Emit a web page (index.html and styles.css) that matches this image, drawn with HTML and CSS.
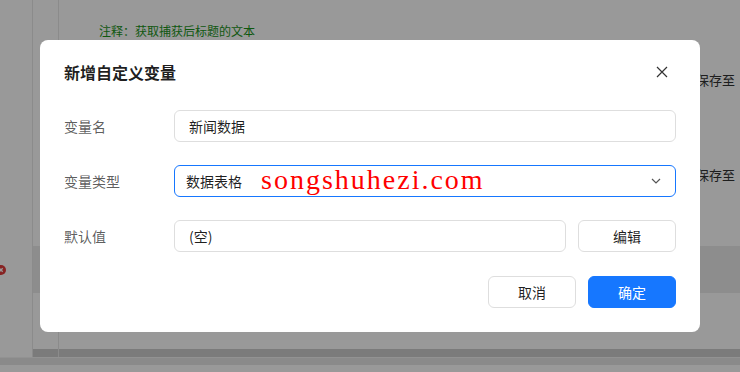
FILE: index.html
```html
<!DOCTYPE html>
<html lang="zh-CN">
<head>
  <meta charset="UTF-8">
  <meta name="viewport" content="width=device-width, initial-scale=1">
  <title>新增自定义变量</title>
  <link rel="stylesheet" href="styles.css">
</head>
<body>
<div class="page">
  <div class="workspace">
    <aside class="rail">
      <svg class="err-dot" width="10" height="10" viewBox="0 0 10 10"><circle cx="5" cy="5" r="5" fill="#e23b3b"/><path d="M3.3 3.3L6.7 6.7M6.7 3.3L3.3 6.7" stroke="#fff" stroke-width="1.3"/></svg>
    </aside>
    <div class="content">
      <div class="row row-note">
        <div class="gutter"></div>
        <div class="cell"><span class="note">注释：获取捕获后标题的文本</span></div>
      </div>
      <div class="row row-save">
        <div class="gutter"></div>
        <div class="cell cell-end"><span class="save-label">保存至</span><span class="save-pick"></span></div>
      </div>
      <div class="row row-save2">
        <div class="gutter"></div>
        <div class="cell cell-end"><span class="save-label">保存至</span><span class="save-pick"></span></div>
      </div>
      <div class="row row-band">
        <div class="gutter"></div>
        <div class="cell"></div>
      </div>
      <div class="row row-fill">
        <div class="gutter"></div>
        <div class="cell"></div>
      </div>
      <div class="row row-scroll">
        <div class="gutter"></div>
        <div class="cell"></div>
      </div>
    </div>
  </div>
  <div class="statusbar"></div>
</div>

<div class="mask">
  <div class="modal">
    <div class="modal-header">
      <span class="modal-title">新增自定义变量</span>
      <button class="modal-close" aria-label="关闭">
        <svg width="12" height="12" viewBox="0 0 12 12"><path d="M1 1L11 11M11 1L1 11" stroke="#333" stroke-width="1.2" fill="none"/></svg>
      </button>
    </div>

    <div class="form">
      <div class="form-row">
        <label class="form-label">变量名</label>
        <div class="field input">新闻数据</div>
      </div>
      <div class="form-row">
        <label class="form-label">变量类型</label>
        <div class="field select">
          <span>数据表格</span>
          <svg class="chevron" width="10" height="6" viewBox="0 0 10 6"><path d="M1 1L5 5L9 1" stroke="#555" stroke-width="1.2" fill="none"/></svg>
          <span class="watermark">songshuhezi.com</span>
        </div>
      </div>
      <div class="form-row">
        <label class="form-label">默认值</label>
        <div class="field input">(空)</div>
        <button class="btn btn-edit">编辑</button>
      </div>
    </div>

    <div class="modal-footer">
      <button class="btn">取消</button>
      <button class="btn btn-primary">确定</button>
    </div>
  </div>
</div>
</body>
</html>
```

FILE: styles.css
```css
body {
  margin: 0;
  font-family: "Noto Sans CJK SC", "Noto Sans", sans-serif;
  background: #fff;
  overflow: hidden;
}
.page {
  height: 100vh;
  display: flex;
  flex-direction: column;
}
.workspace {
  flex: 1;
  display: flex;
}
.rail {
  width: 33px;
  border-right: 1px solid #e8e8e8;
  display: flex;
  flex-direction: column;
  padding-top: 265px;
  box-sizing: border-box;
}
.err-dot {
  margin-left: -4px;
}
.content {
  flex: 1;
  display: flex;
  flex-direction: column;
}
.row {
  display: flex;
}
.gutter {
  width: 25px;
  border-right: 1px solid #e8e8e8;
}
.cell {
  flex: 1;
  display: flex;
  align-items: center;
}
.cell-end {
  justify-content: flex-end;
}
.row-note {
  height: 60px;
}
.note {
  margin-left: 40px;
  font-size: 12px;
  color: #1a931a;
}
.row-save {
  height: 38px;
}
.row-save2 {
  height: 148px;
  align-items: flex-start;
}
.row-save2 .cell {
  height: 38px;
  margin-top: 57px;
}
.save-label {
  font-size: 13px;
  color: #333;
}
.save-pick {
  width: 30px;
  height: 22px;
  margin-left: 5px;
  margin-right: -30px;
  border-radius: 4px;
  background: #e4e9f2;
}
.row-band {
  height: 47px;
  background: #ececec;
}
.row-fill {
  flex: 1;
}
.row-scroll {
  height: 8px;
  background: #cdcdcd;
}
.statusbar {
  height: 14px;
  border-top: 1px solid #f4f4f4;
  background: linear-gradient(#e6e6e6 0 7px, #fff 7px);
}
.mask {
  position: fixed;
  inset: 0;
  background: rgba(0, 0, 0, 0.4);
}
.modal {
  position: absolute;
  left: 40px;
  top: 40px;
  width: 660px;
  box-sizing: border-box;
  padding: 20px 24px 24px;
  background: #fff;
  border-radius: 8px;
}
.modal-header {
  display: flex;
  align-items: center;
  justify-content: space-between;
  height: 24px;
}
.modal-title {
  font-size: 16px;
  font-weight: 600;
  color: rgba(0, 0, 0, 0.88);
}
.modal-close {
  width: 16px;
  height: 16px;
  margin-right: 6px;
  padding: 0;
  border: none;
  background: none;
  display: flex;
  align-items: center;
  justify-content: center;
}
.form {
  margin-top: 26px;
  display: flex;
  flex-direction: column;
  gap: 23px;
}
.form-row {
  display: flex;
  align-items: center;
  height: 32px;
}
.form-label {
  width: 110px;
  font-size: 14px;
  color: rgba(0, 0, 0, 0.65);
}
.field {
  flex: 1;
  height: 32px;
  box-sizing: border-box;
  border: 1px solid #dedede;
  border-radius: 6px;
  padding: 0 14px;
  display: flex;
  align-items: center;
  font-size: 14px;
  color: rgba(0, 0, 0, 0.88);
}
.select {
  position: relative;
  border-color: #1677ff;
  padding: 0 14px 0 11px;
  justify-content: space-between;
}
.watermark {
  position: absolute;
  left: 86px;
  top: 0;
  font-family: "Liberation Serif", serif;
  font-size: 28px;
  line-height: 28px;
  letter-spacing: 2px;
  color: #ff0000;
}
.btn {
  width: 88px;
  height: 32px;
  box-sizing: border-box;
  border: 1px solid #dedede;
  border-radius: 6px;
  background: #fff;
  font-family: inherit;
  font-size: 14px;
  color: rgba(0, 0, 0, 0.88);
}
.btn-edit {
  width: 98px;
  margin-left: 12px;
}
.btn-primary {
  border-color: #1677ff;
  background: #1677ff;
  color: #fff;
}
.modal-footer {
  margin-top: 24px;
  display: flex;
  justify-content: flex-end;
  gap: 12px;
}
```
